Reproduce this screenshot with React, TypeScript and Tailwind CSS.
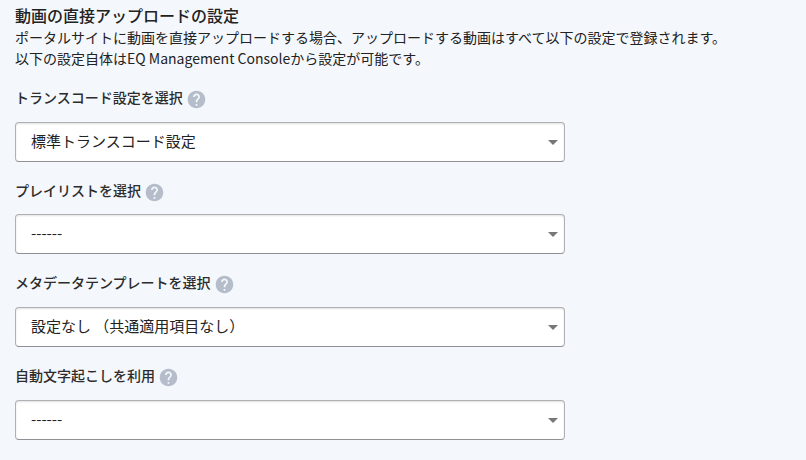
import React from 'react';

const fields = [
    { label: 'トランスコード設定を選択', value: '標準トランスコード設定' },
    { label: 'プレイリストを選択', value: '------' },
    { label: 'メタデータテンプレートを選択', value: '設定なし （共通適用項目なし）' },
    { label: '自動文字起こしを利用', value: '------' },
];

const HelpIcon = () => (
    <svg viewBox="0 0 24 24" className="w-[21px] h-[21px] shrink-0 mt-[4px]" fill="#b6bdca">
        <path d="M12 2C6.48 2 2 6.48 2 12s4.48 10 10 10 10-4.48 10-10S17.52 2 12 2zm1 17h-2v-2h2v2zm2.07-7.75l-.9.92C13.45 12.9 13 13.5 13 15h-2v-.5c0-1.1.45-2.1 1.17-2.83l1.24-1.26c.37-.36.59-.86.59-1.41 0-1.1-.9-2-2-2s-2 .9-2 2H8c0-2.21 1.79-4 4-4s4 1.79 4 4c0 .88-.36 1.68-.93 2.25z" />
    </svg>
);

const App = () => {
    return (
        <div className="w-full h-[460px] overflow-hidden bg-[#f4f7fc] pl-[15px] pt-[3px] text-[#222] font-['Noto_Sans_CJK_JP',sans-serif]">
            <h2 className="text-[16px] leading-6 font-medium">動画の直接アップロードの設定</h2>
            <p className="text-[14px] leading-[21px] whitespace-nowrap">
                ポータルサイトに動画を直接アップロードする場合、アップロードする動画はすべて以下の設定で登録されます。
                <br />
                以下の設定自体はEQ Management Consoleから設定が可能です。
            </p>
            <div className="mt-[17.9px] flex flex-col gap-[17.85px]">
                {fields.map((field) => (
                    <div key={field.label}>
                        <div className="flex items-center gap-[3px] h-[21px] text-[14px] font-medium text-[#2c2c2c]">
                            <span>{field.label}</span>
                            <HelpIcon />
                        </div>
                        <button className="mt-[13.85px] flex items-center justify-between w-[550px] h-10 rounded-[4px] border border-[#aeb0b3] border-b-[#8e9093] bg-white shadow-[inset_0_1px_2px_rgba(0,0,0,0.12)] pl-[15px] pr-[6px] text-[15px] text-left">
                            <span className="pb-[1.8px]">{field.value}</span>
                            <svg viewBox="0 0 10 5" className="mt-px w-[10px] h-[5px]" fill="#777">
                                <path d="M0 0h10L5 5z" />
                            </svg>
                        </button>
                    </div>
                ))}
            </div>
        </div>
    );
};

export default App;
